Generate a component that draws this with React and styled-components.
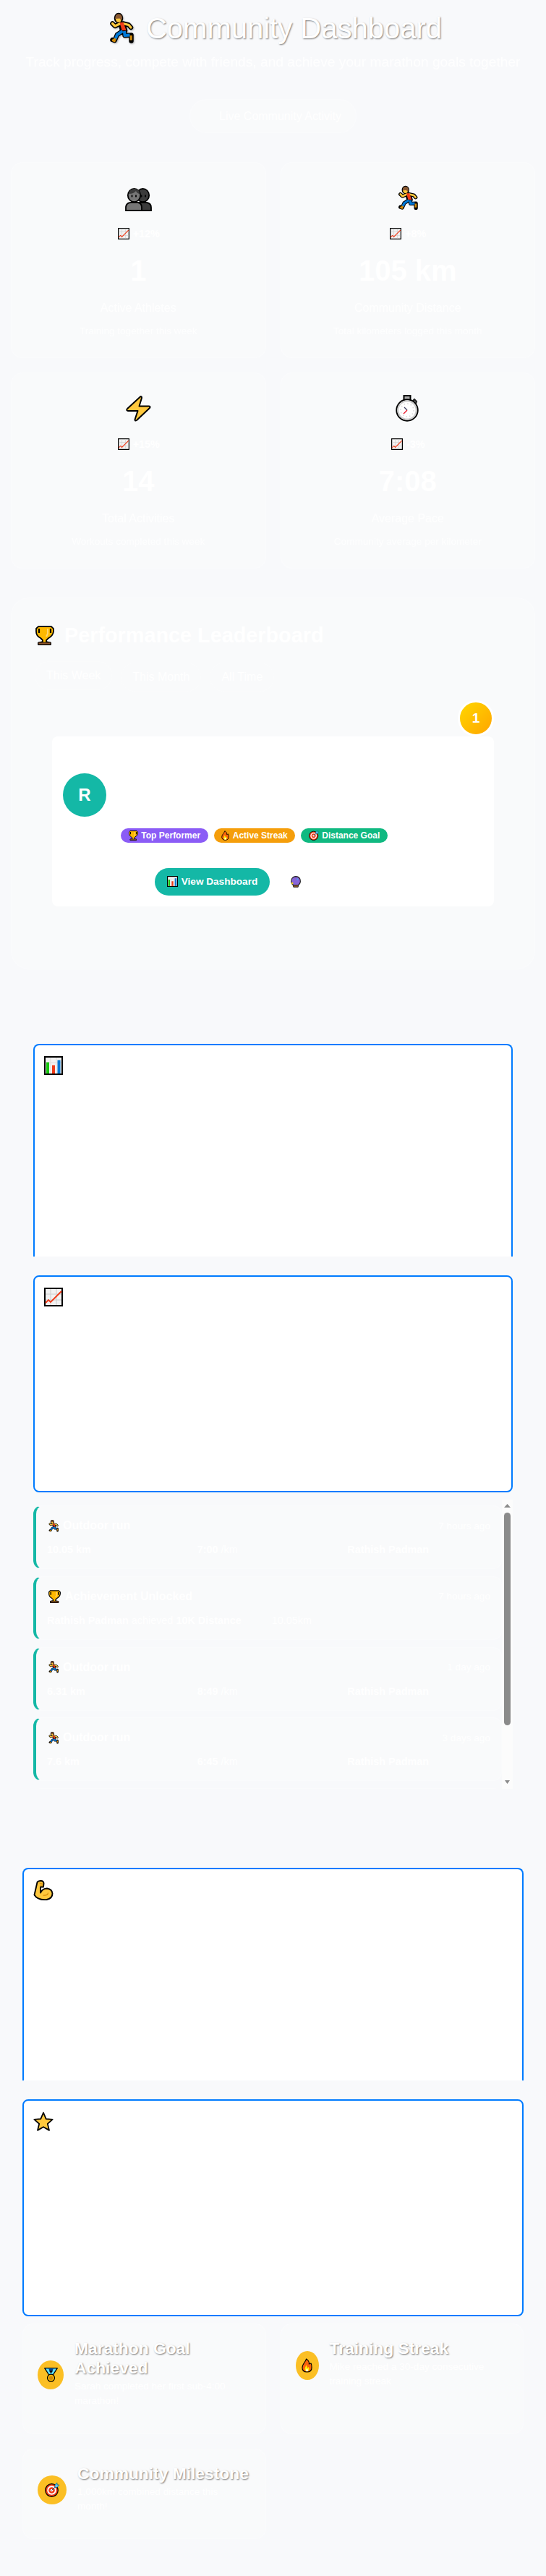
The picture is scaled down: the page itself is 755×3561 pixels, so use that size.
import React from 'react';
import styled, { createGlobalStyle, css } from 'styled-components';

const Global = createGlobalStyle`
  * { box-sizing: border-box; }
  body { margin: 0; background: #f8f9fb; font-family: "Liberation Sans", Arial, sans-serif; color: #fff; }
  h1, h2, h3, p { margin: 0; }
`;

/* ---------- icons ---------- */
const Svg = styled.svg`
  display: block;
  flex: none;
  overflow: visible;
`;

const Runner = ({ w, h }) => (
  <Svg width={w} height={h} viewBox="0 0 34 43" preserveAspectRatio="none">
    <g fill="none" stroke="#000" strokeWidth="6.500" strokeLinejoin="round" strokeLinecap="round">
      <ellipse cx="13" cy="7" rx="3" ry="4" fill="#000" />
      <path d="M15.500 14.500L8 18 4.500 14.500M19 14.500l8 2 3 3.500" />
      <path d="M16 15h3l3 9h-4z" fill="#000" />
      <path d="M18.500 25L11 30 7.500 38l-3-1M21 25l.500 6 9-.500v8" />
    </g>
    <path d="M15.500 14.500L8 18 4.500 14.500M19 14.500l8 2 3 3.500" fill="none" stroke="#ffc83d" strokeWidth="3.200" strokeLinejoin="round" strokeLinecap="round" />
    <ellipse cx="13" cy="7.500" rx="4.200" ry="5.200" fill="#ffc83d" />
    <path d="M8.300 8Q8 1.500 13 1.200q5 .3 5 6.300l-1.500 2.500-2-2.500z" fill="#8b5a33" />
    <path d="M14.500 13h5l4 11h-6z" fill="#f03a17" />
    <path d="M18.500 25L11 30 8.500 36M21 25l.500 6 7-.500" fill="none" stroke="#0078d7" strokeWidth="4" strokeLinejoin="round" />
    <path d="M8.200 35l-1 3.500-3-1.200M30.200 31v6.500" fill="none" stroke="#d38b08" strokeWidth="3.200" strokeLinejoin="round" />
  </Svg>
);

const People = () => (
  <Svg width="37" height="32" viewBox="0 0 37 32">
    <g stroke="#000" strokeWidth="1.8">
      <ellipse cx="24.5" cy="10" rx="8.7" ry="9.2" fill="#3b3b3b" />
      <path d="M12 31V26q1-6 8-6h10q6 1 6 7v4z" fill="#3b3b3b" />
      <ellipse cx="12.5" cy="10" rx="8.7" ry="9.2" fill="#767676" />
      <path d="M1 31V26q1-6 7-6h10q5 1 5 7v4z" fill="#767676" />
    </g>
    <path d="M5 8q1-7 8-7 7 0 7 7-4-1-5-4-3 4-10 4z" fill="#3b3b3b" />
    <g fill="#000"><ellipse cx="9.5" cy="11" rx="1" ry="1.8" /><ellipse cx="15" cy="11" rx="1" ry="1.8" /><ellipse cx="22.5" cy="11" rx="1" ry="1.8" /><ellipse cx="28" cy="11" rx="1" ry="1.8" /></g>
  </Svg>
);

const Bolt = () => (
  <Svg width="35" height="36" viewBox="0 0 35 36">
    <path d="M20.500 1Q22 1 22 3l-3.500 11.500H32q2.500.500 1 2.500L15 34q-2.500 1.500-2.500-1L16.500 21H3q-3-.500-1-3z" fill="#ffc83d" stroke="#000" strokeWidth="2" strokeLinejoin="round" />
  </Svg>
);

const Stopwatch = () => (
  <Svg width="33" height="37" viewBox="0 0 33 37">
    <rect x="11.5" y="1" width="9" height="6" fill="#aaa" stroke="#000" strokeWidth="2" />
    <path d="M24 8l2-2 3 3-1 3" fill="#777" stroke="#222" strokeWidth="2" />
    <circle cx="16" cy="21" r="14.7" fill="#fff" stroke="#000" strokeWidth="2" />
    <circle cx="16" cy="21" r="12.6" fill="none" stroke="#ccc" strokeWidth="2" />
    <circle cx="16" cy="21" r="9" fill="none" stroke="#ddd" strokeWidth="1.6" strokeDasharray="1.6 3.1" />
    <path d="M12 17l4 4" stroke="#404060" strokeWidth="1.3" />
    <path d="M16 21l-5 5" stroke="#e81224" strokeWidth="1.3" />
  </Svg>
);

const ChartUp = ({ s = 16 }) => (
  <Svg width={s} height={s} viewBox="0 0 26 26">
    <rect x="1" y="1" width="24" height="24" fill="#f2f2f2" stroke="#000" strokeWidth="2" />
    <path d="M2 9h22M2 17h22M9 2v22M17 2v22" stroke="#ccc" strokeWidth="1" />
    <path d="M2 21l4-4 3 3L24 5" fill="none" stroke="#f03a17" strokeWidth="1.9" />
  </Svg>
);

const BarChart = ({ s = 16 }) => (
  <Svg width={s} height={s} viewBox="0 0 26 26">
    <rect x="1" y="1" width="24" height="24" fill="#f2f2f2" stroke="#000" strokeWidth="2" />
    <path d="M2 9h22M9 2v22M17 2v22" stroke="#ddd" strokeWidth="1" />
    <path d="M3 8.5h4V24H3z" fill="#16c60c" />
    <path d="M11 12.5h4V24h-4z" fill="#f03a17" />
    <path d="M18.500 5.500h4V24h-4z" fill="#0078d7" />
  </Svg>
);

const Trophy = ({ w, h }) => (
  <Svg width={w} height={h} viewBox="0 0 26 27" preserveAspectRatio="none">
    <path d="M4 1.200h18l3 3v4q-1 6-7 9l-3 3v2l6 1.500V26H4v-2.500L10 22v-2l-3-3q-6-3-6-9V4z" fill="#ffb900" stroke="#000" strokeWidth="1.800" strokeLinejoin="round" />
    <path d="M5 4v6M21 4v6" stroke="#000" strokeWidth="2.200" />
    <path d="M17 4v7l-2 4" stroke="#ffd56b" strokeWidth="2" fill="none" />
    <path d="M4 23h17v3H4z" fill="#8e562e" stroke="#000" strokeWidth=".8" />
  </Svg>
);

const Fire = ({ w, h }) => (
  <Svg width={w} height={h} viewBox="0 0 16 20" preserveAspectRatio="none">
    <path d="M7 1c-1 4-6 7-6 12 0 4 3 6 7 6s7-2 7-6c0-2 0-4-1-6l-3 1c1-3-2-6-4-7z" fill="#f7630c" stroke="#000" strokeWidth="1.200" strokeLinejoin="round" />
    <path d="M7 9c0 2-3 4-2 7 1 3 5 3 6 0 1-2-1-4-1-4l-1 2z" fill="#fff100" />
    <path d="M8 14l-2 3q2 2 4 0z" fill="#fff" />
  </Svg>
);

const Target = ({ s }) => (
  <Svg width={s} height={s} viewBox="0 0 20 20">
    <circle cx="9.500" cy="10.500" r="8.800" fill="#f03a17" stroke="#000" strokeWidth="1.200" />
    <circle cx="9.500" cy="10.500" r="5.300" fill="none" stroke="#fff" strokeWidth="1.900" />
    <circle cx="9.500" cy="10.500" r="1.800" fill="#fff" />
    <path d="M9.500 10.500L14 6V3l3-3v3h3l-3 3.500h-3z" fill="#5dc8f5" stroke="#0a5b86" strokeWidth=".7" />
  </Svg>
);

const CrystalBall = () => (
  <Svg width="14" height="16" viewBox="0 0 14 16">
    <path d="M3.200 12h7.600l-.6 3.300H3.800z" fill="#8e562e" stroke="#222" strokeWidth=".9" />
    <path d="M7 .6q6.400.4 6.400 6.600-.2 3.800-3 5.300H3.600Q.8 11 .8 7.200 1 .8 7 .6z" fill="#8764d8" stroke="#222" strokeWidth="1.100" />
    <ellipse cx="9.400" cy="4.600" rx=".8" ry="1.400" fill="#4aa8f0" />
    <path d="M2 8l.8 1.500 1.600.5-1.600.6L2 12l-.6-1.500L0 10l1.400-.5z" fill="#ffe100" />
  </Svg>
);

const Muscle = () => (
  <Svg width="28" height="28" viewBox="0 0 28 28">
    <path d="M5.500 3q1-2 5-2 4 0 4 3.500l-.5 5h-4v8q3-6 9-6 7 1 7.500 7 0 7-8 8.500Q6 28 1.500 20.500z" fill="#ffc83d" stroke="#000" strokeWidth="1.900" strokeLinejoin="round" />
    <path d="M8.500 4l4 1M9 7h4M20.500 17.500q0 4-7 3.500" fill="none" stroke="#d38b08" strokeWidth="1.200" />
  </Svg>
);

const Star = () => (
  <Svg width="28" height="27" viewBox="0 0 28 27">
    <path d="M14 1.500l3.700 8.600 9 .8-6.900 6 2.200 9L14 21.200 6 25.900l2.200-9-6.900-6 9-.8z" fill="#ffc83d" stroke="#000" strokeWidth="1.800" strokeLinejoin="round" />
  </Svg>
);

const Medal = () => (
  <Svg width="19" height="20" viewBox="0 0 19 20">
    <path d="M.7.700h17.600L12 10.500H7z" fill="#5de0ff" stroke="#000" strokeWidth="1.300" strokeLinejoin="round" />
    <path d="M6 1.400h7L9.500 7z" fill="#003e92" />
    <path d="M6.500 4h6l-3 4z" fill="#111" />
    <circle cx="9.500" cy="14.200" r="5" fill="#ffb900" stroke="#000" strokeWidth="1.200" />
    <circle cx="9.500" cy="14.200" r="2.700" fill="#d38b08" />
  </Svg>
);

/* ---------- page ---------- */
const Page = styled.main`
  width: 755px;
  height: 3561px;
  padding: 15px 15px 0;
  overflow: hidden;
`;

const surface = css`
  background: rgba(255, 255, 255, 0.2);
  border: 1px solid rgba(255, 255, 255, 0.2);
`;

const Header = styled.header`
  display: flex;
  flex-direction: column;
  align-items: center;
`;

const Title = styled.h1`
  display: flex;
  align-items: center;
  gap: 17px;
  padding-left: 7px;
  font-size: 40px;
  line-height: 48px;
  font-weight: 400;
  white-space: nowrap;
  text-shadow: 1px 1px 2px rgba(0, 0, 0, 0.5);
  svg { filter: drop-shadow(1px 1px 1px rgba(0, 0, 0, 0.3)); }
`;

const Subtitle = styled.p`
  margin-top: 8px;
  font-size: 19.2px;
  line-height: 30px;
  white-space: nowrap;
  opacity: 0.9;
`;

const LivePill = styled.div`
  ${surface}
  display: flex;
  align-items: center;
  gap: 8px;
  height: 47px;
  margin-top: 36px;
  padding: 0 20px;
  border-radius: 25px;
  font-size: 16px;
`;

const LiveDot = styled.span`
  width: 12px;
  height: 12px;
  border-radius: 50%;
`;

const Stats = styled.section`
  display: grid;
  grid-template-columns: 1fr 1fr;
  gap: 20px;
  margin-top: 39.5px;
`;

const StatCard = styled.article`
  ${surface}
  display: flex;
  flex-direction: column;
  align-items: center;
  height: 271px;
  padding-top: 29px;
  border-radius: 16px;
`;

const StatIcon = styled.div`
  display: flex;
  align-items: center;
  justify-content: center;
  height: 45.5px;
  padding-bottom: ${(p) => p.$lift}px;
`;

const Trend = styled.div`
  display: flex;
  align-items: center;
  gap: 5px;
  margin-top: 14px;
  padding-left: 1px;
  font-size: 14.4px;
  font-weight: 700;
  line-height: 20px;
`;

const StatValue = styled.div`
  margin-top: 17px;
  font-size: 40px;
  font-weight: 700;
  line-height: 48px;
`;

const StatLabel = styled.div`
  margin-top: 18px;
  font-size: 16px;
  line-height: 20px;
  opacity: 0.9;
`;

const StatNote = styled.div`
  margin-top: 11.5px;
  font-size: 13.6px;
  line-height: 20px;
  opacity: 0.8;
`;

const Leaderboard = styled.section`
  ${surface}
  height: 514px;
  margin-top: 40px;
  padding: 33.5px 32px 0;
  border-radius: 25px;
`;

const SectionTitle = styled.h2`
  display: flex;
  align-items: center;
  gap: 14px;
  padding-left: 1px;
  font-size: 28.8px;
  line-height: 36px;
`;

const Tabs = styled.div`
  display: flex;
  gap: 12px;
  margin-top: 20px;
`;

const Tab = styled.button`
  height: 40px;
  padding: 0 15px;
  border: 1px solid rgba(255, 255, 255, 0.1);
  border-radius: 20px;
  background: rgba(255, 255, 255, ${(p) => (p.$active ? 0.1 : 0.05)});
  color: #fff;
  font: 400 16px "Liberation Sans", Arial, sans-serif;
  transform: translateY(${(p) => (p.$active ? '-2px' : '0')});
`;

const Entry = styled.div`
  display: flex;
  flex-direction: column;
  width: 611px;
  margin: 12px 0 0 24px;
`;

const Rank = styled.div`
  display: flex;
  align-items: center;
  justify-content: center;
  align-self: flex-end;
  width: 50px;
  height: 50px;
  border: 3px solid #fff;
  border-radius: 50%;
  background: linear-gradient(135deg, #ffd700, #ffa500);
  font-size: 19.2px;
  font-weight: 700;
`;

const Athlete = styled.div`
  height: 235px;
  padding: 51px 15px 0;
  border-radius: 8px;
  background: #fff;
`;

const Avatar = styled.div`
  display: flex;
  align-items: center;
  justify-content: center;
  width: 60px;
  height: 60px;
  border-radius: 50%;
  background: #14b8a6;
  font-size: 24px;
  font-weight: 700;
`;

const Badges = styled.div`
  display: flex;
  gap: 8px;
  margin: 16px 0 0 80px;
`;

const Badge = styled.span`
  display: flex;
  align-items: center;
  justify-content: center;
  gap: 4.5px;
  width: ${(p) => p.$w}px;
  height: 20px;
  border-radius: 12px;
  background: ${(p) => p.$color};
  font-size: 12px;
  font-weight: 700;
  white-space: nowrap;
`;

const Actions = styled.div`
  display: flex;
  align-items: center;
  gap: 29px;
  margin: 35px 0 0 127px;
`;

const PrimaryButton = styled.button`
  display: flex;
  align-items: center;
  justify-content: center;
  gap: 5px;
  width: 159px;
  height: 38px;
  padding: 0 0 1px;
  border: 0;
  border-radius: 20px;
  background: #14b8a6;
  color: #fff;
  font: 700 13.6px "Liberation Sans", Arial, sans-serif;
  white-space: nowrap;
`;

const Panel = styled.section`
  margin-top: ${(p) => p.$top}px;
  padding: 0 ${(p) => p.$inset}px;
`;

const Chart = styled.div`
  height: ${(p) => (p.$cut ? 294 : 300)}px;
  padding: 15px 13px;
  border: 2px solid #007bff;
  border-radius: 8px;
  background: #fff;
  ${(p) => p.$cut && css`
    border-bottom: 0;
    border-bottom-left-radius: 0;
    border-bottom-right-radius: 0;
    margin-bottom: 26px;
  `}
`;

const FeedFrame = styled.div`
  display: flex;
  height: 400px;
  margin-top: 10px;
  overflow: hidden;
`;

const Feed = styled.div`
  display: flex;
  flex: 1;
  flex-direction: column;
  gap: 9.800px;
  padding-top: 8px;
`;

const FeedItem = styled.article`
  ${surface}
  flex: none;
  height: 88px;
  padding: 15px 15px 0 15px;
  border-left: 4px solid #14b8a6;
  border-radius: 12px;
`;

const FeedHead = styled.div`
  display: flex;
  align-items: center;
  gap: 6px;
  height: 24px;
  padding-left: 2px;
  font-size: 16px;
  font-weight: 700;
`;

const FeedTime = styled.span`
  margin-left: auto;
  font-size: 13.6px;
  font-weight: 400;
`;

const FeedStats = styled.div`
  display: grid;
  grid-template-columns: repeat(3, 1fr);
  gap: 10px;
  margin-top: 11px;
  font-size: 14.4px;
  line-height: 20px;
`;

const FeedNote = styled.div`
  display: flex;
  gap: 42px;
  margin-top: 11px;
  font-size: 14.4px;
  line-height: 20px;
`;

const Scrollbar = styled.div`
  display: flex;
  flex-direction: column;
  align-items: center;
  justify-content: space-between;
  width: 15px;
  padding: 6px 0 7px;
  background: #fcfcfc;
`;

const Thumb = styled.div`
  width: 9px;
  height: 294px;
  margin: 7px 0 auto;
  border-radius: 5px;
  background: #8b8b8b;
`;

const Arrow = ({ down }) => (
  <Svg width="9" height="5" viewBox="0 0 9 5">
    <path d={down ? 'M1 0h7L4.500 5z' : 'M0 5h9L4.500 0z'} fill="#8b8b8b" />
  </Svg>
);

const Awards = styled.div`
  display: grid;
  grid-template-columns: 1fr 1fr;
  gap: 20px;
  margin-top: 10px;
  align-items: start;
`;

const Award = styled.article`
  ${surface}
  display: flex;
  align-items: flex-start;
  gap: 15px;
  height: ${(p) => p.$h}px;
  padding: 20px 15px 0 20px;
  border-radius: 15px;
`;

const AwardIcon = styled.div`
  display: flex;
  flex: none;
  align-items: center;
  justify-content: center;
  width: ${(p) => p.$w}px;
  height: 40px;
  margin-top: ${(p) => p.$top}px;
  border-radius: 50%;
  background: #fbbf24;
`;

const AwardTitle = styled.h3`
  font-size: 22.8px;
  line-height: 27px;
  text-shadow: 1px 1px 2px rgba(0, 0, 0, 0.5);
`;

const AwardText = styled.p`
  margin-top: 1.500px;
  font-size: 13.6px;
  line-height: 20.400px;
  white-space: pre-line;
`;

const stats = [
  { icon: <People />, lift: 0, trend: '+12%', value: '1', label: 'Active Athletes', note: 'Training together this week' },
  { icon: <Runner w={28} h={34} />, lift: 5, trend: '+8%', value: '105 km', label: 'Community Distance', note: 'Total kilometers logged this month' },
  { icon: <Bolt />, lift: 5, trend: '+15%', value: '14', label: 'Total Activities', note: 'Workouts completed this week' },
  { icon: <Stopwatch />, lift: 5, trend: '-3%', value: '7:08', label: 'Average Pace', note: 'Community average per kilometer' },
];

const Run = ({ ago, km, pace }) => (
  <FeedItem>
    <FeedHead><Runner w={14} h={17} /><span>Outdoor run</span><FeedTime>{ago}</FeedTime></FeedHead>
    <FeedStats>
      <b>{km} km</b>
      <span><b>{pace}</b> /km</span>
      <b>Rathish Padman</b>
    </FeedStats>
  </FeedItem>
);

export default function App() {
  return (
    <Page>
      <Global />
      <Header>
        <Title><Runner w={34} h={43} />Community Dashboard</Title>
        <Subtitle>Track progress, compete with friends, and achieve your marathon goals together</Subtitle>
        <LivePill><LiveDot />Live Community Activity</LivePill>
      </Header>

      <Stats>
        {stats.map((s) => (
          <StatCard key={s.label}>
            <StatIcon $lift={s.lift}>{s.icon}</StatIcon>
            <Trend><ChartUp />{s.trend}</Trend>
            <StatValue>{s.value}</StatValue>
            <StatLabel>{s.label}</StatLabel>
            <StatNote>{s.note}</StatNote>
          </StatCard>
        ))}
      </Stats>

      <Leaderboard>
        <SectionTitle><Trophy w={26} h={27} />Performance Leaderboard</SectionTitle>
        <Tabs>
          <Tab $active>This Week</Tab>
          <Tab>This Month</Tab>
          <Tab>All Time</Tab>
        </Tabs>
        <Entry>
          <Rank>1</Rank>
          <Athlete>
            <Avatar>R</Avatar>
            <Badges>
              <Badge $w={121} $color="#8b5cf6"><Trophy w={13} h={14} />Top Performer</Badge>
              <Badge $w={112} $color="#f59e0b"><Fire w={11} h={14} />Active Streak</Badge>
              <Badge $w={120} $color="#10b981"><Target s={14} />Distance Goal</Badge>
            </Badges>
            <Actions>
              <PrimaryButton><BarChart s={15} />View Dashboard</PrimaryButton>
              <CrystalBall />
            </Actions>
          </Athlete>
        </Entry>
      </Leaderboard>

      <Panel $top={103.5} $inset={31}>
        <Chart $cut><BarChart s={26} /></Chart>
        <Chart><ChartUp s={26} /></Chart>
        <FeedFrame>
          <Feed>
            <Run ago="7 hours ago" km="10.05" pace="7:00" />
            <FeedItem>
              <FeedHead><Trophy w={17} h={18} /><span>Achievement Unlocked</span><FeedTime>7 hours ago</FeedTime></FeedHead>
              <FeedNote><span><b>Rathish Padman</b> achieved <b>10K Distance</b></span><span>10.05km</span></FeedNote>
            </FeedItem>
            <Run ago="1 day ago" km="6.31" pace="8:49" />
            <Run ago="3 days ago" km="7.6" pace="6:45" />
            <FeedItem />
          </Feed>
          <Scrollbar><Arrow /><Thumb /><Arrow down /></Scrollbar>
        </FeedFrame>
      </Panel>

      <Panel $top={109} $inset={16}>
        <Chart $cut><Muscle /></Chart>
        <Chart><Star /></Chart>
        <Awards>
          <Award $h={153}>
            <AwardIcon $w={36} $top={30}><Medal /></AwardIcon>
            <div>
              <AwardTitle>Marathon Goal Achieved</AwardTitle>
              <AwardText>{'Sarah completed her first sub-4:00\nmarathon!'}</AwardText>
            </div>
          </Award>
          <Award $h={153}>
            <AwardIcon $w={32} $top={17}><Fire w={15} h={20} /></AwardIcon>
            <div>
              <AwardTitle>Training Streak</AwardTitle>
              <AwardText>{'Mike reached a 30-day consecutive\ntraining streak'}</AwardText>
            </div>
          </Award>
          <Award $h={125}>
            <AwardIcon $w={40} $top={16}><Target s={20} /></AwardIcon>
            <div>
              <AwardTitle>Community Milestone</AwardTitle>
              <AwardText>{'1,000km combined distance this\nmonth!'}</AwardText>
            </div>
          </Award>
        </Awards>
      </Panel>
    </Page>
  );
}
